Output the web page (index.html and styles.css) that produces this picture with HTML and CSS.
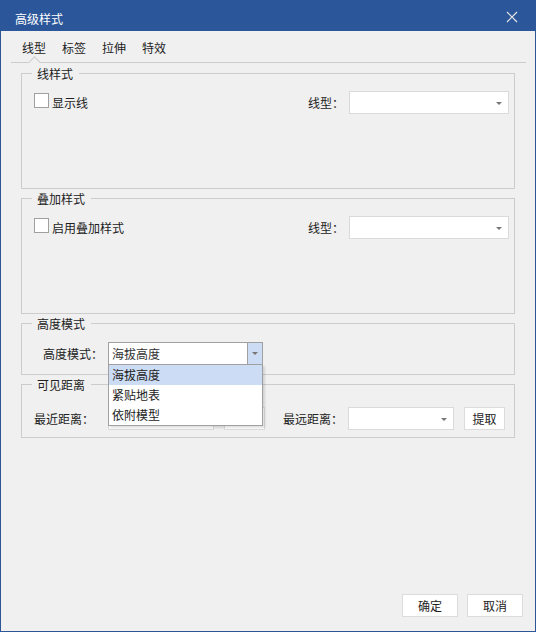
FILE: index.html
```html
<!DOCTYPE html>
<html lang="zh-CN">

<head>
  <meta charset="UTF-8" />
  <title>高级样式</title>
  <link rel="stylesheet" href="styles.css">
</head>

<body>
  <div class="dialog">
    <!-- Title Bar -->
    <div class="titlebar">
      <span class="title">高级样式</span>
      <svg class="close" width="12" height="12" viewBox="0 0 12 12">
        <path d="M1 1 L11 11 M11 1 L1 11" stroke="#e6e6e6" stroke-width="1.2" fill="none" />
      </svg>
    </div>

    <div class="content">
      <!-- Tabs -->
      <div class="tabs">
        <span class="tab active">线型</span>
        <span class="tab">标签</span>
        <span class="tab">拉伸</span>
        <span class="tab">特效</span>
      </div>

      <div class="panel">
        <!-- 线样式 -->
        <div class="group group-tall">
          <div class="group-title">线样式</div>
          <div class="row row-split">
            <label class="check"><span class="box"></span>显示线</label>
            <div class="field">
              <span class="field-label">线型：</span>
              <div class="combo combo-wide"><span class="arrow"></span></div>
            </div>
          </div>
        </div>

        <!-- 叠加样式 -->
        <div class="group group-tall">
          <div class="group-title">叠加样式</div>
          <div class="row row-split">
            <label class="check"><span class="box"></span>启用叠加样式</label>
            <div class="field">
              <span class="field-label">线型：</span>
              <div class="combo combo-wide"><span class="arrow"></span></div>
            </div>
          </div>
        </div>

        <!-- 高度模式 -->
        <div class="group group-height">
          <div class="group-title">高度模式</div>
          <div class="row row-height">
            <span class="field-label">高度模式：</span>
            <div class="combo combo-mode open">
              <span class="combo-text">海拔高度</span>
              <span class="combo-btn"><span class="arrow"></span></span>
              <ul class="popup">
                <li class="selected">海拔高度</li>
                <li>紧贴地表</li>
                <li>依附模型</li>
              </ul>
            </div>
          </div>
        </div>

        <!-- 可见距离 -->
        <div class="group group-distance">
          <div class="group-title">可见距离</div>
          <div class="row row-distance">
            <span class="field-label">最近距离：</span>
            <div class="combo combo-short near"><span class="arrow"></span></div>
            <button class="btn btn-small">提取</button>
            <span class="field-label far-label">最远距离：</span>
            <div class="combo combo-short"><span class="arrow"></span></div>
            <button class="btn btn-small">提取</button>
          </div>
        </div>
      </div>

      <!-- Footer -->
      <div class="footer">
        <button class="btn btn-footer">确定</button>
        <button class="btn btn-footer">取消</button>
      </div>
    </div>
  </div>
</body>

</html>
```

FILE: styles.css
```css
/* General Styles */
* {
  box-sizing: border-box;
}

body {
  margin: 0;
  padding: 0;
  font-family: "Noto Sans CJK SC", "Noto Sans", sans-serif;
  font-size: 12px;
  color: #333;
  background-color: #f0f0f0;
}

/* Window */
.dialog {
  width: 536px;
  height: 632px;
  display: flex;
  flex-direction: column;
  background-color: #f0f0f0;
  border: 1px solid #2b579a;
  border-top: none;
}

.titlebar {
  height: 31px;
  margin: 0 -1px;
  display: flex;
  justify-content: space-between;
  background-color: #2b579a;
  color: #fff;
}

.title {
  padding: 11px 0 0 15px;
  line-height: 16px;
}

.close {
  margin: 11px 18px 0 0;
}

.content {
  flex: 1;
  display: flex;
  flex-direction: column;
  padding: 0 9px 0 10px;
}

/* Tabs */
.tabs {
  position: relative;
  display: flex;
  gap: 16px;
  padding: 9px 0 7px 11px;
  border-bottom: 1px solid #cccccc;
  line-height: 15px;
}

.tab {
  color: #222;
}

/* little notch under the active tab */
.tab.active::after {
  content: "";
  position: absolute;
  left: 19px;
  bottom: -5px;
  width: 8px;
  height: 8px;
  background-color: #f0f0f0;
  border-top: 1px solid #cccccc;
  border-left: 1px solid #cccccc;
  transform: rotate(45deg);
}

/* Group boxes */
.panel {
  display: flex;
  flex-direction: column;
  gap: 9px;
  padding: 10px 11px 0 10px;
}

.group {
  border: 1px solid #cccccc;
  padding: 0 5px 0 12px;
}

.group-tall {
  height: 116px;
}

.group-height {
  height: 52px;
}

.group-distance {
  height: 54px;
}

.group-title {
  width: fit-content;
  height: 16px;
  margin: -8px 0 0 -2px;
  padding: 0 6px 0 5px;
  line-height: 16px;
  background-color: #f0f0f0;
  color: #222;
}

.row {
  display: flex;
  align-items: center;
  height: 23px;
}

.row-split {
  justify-content: space-between;
  margin-top: 9px;
}

.row-height {
  margin-top: 10px;
  padding-left: 9px;
}

.row-distance {
  margin-top: 14px;
}

/* Checkbox */
.check {
  display: flex;
  align-items: center;
  gap: 3px;
  color: #222;
}

.box {
  width: 15px;
  height: 15px;
  margin-bottom: 4px;
  border: 1px solid #a0a0a0;
  background-color: #fff;
}

.field {
  display: flex;
  align-items: center;
}

.field-label {
  color: #222;
  margin-right: 5px;
}

/* Combo boxes */
.combo {
  position: relative;
  height: 23px;
  border: 1px solid #dadada;
  background-color: #fff;
  display: flex;
  align-items: center;
}

.combo-wide {
  width: 160px;
}

.combo-short {
  width: 106px;
}

.combo-mode {
  width: 155px;
  border-color: #a0a0a0;
}

.combo .arrow {
  position: absolute;
  right: 6px;
  top: 10px;
  width: 0;
  height: 0;
  border-left: 3px solid transparent;
  border-right: 3px solid transparent;
  border-top: 3px solid #777;
}

.combo-text {
  padding-left: 3px;
  line-height: 16px;
}

.combo-btn {
  position: absolute;
  top: 0;
  right: 0;
  width: 15px;
  height: 21px;
  border-left: 1px solid #a0a0a0;
  background-color: #cddcf5;
}

.combo-btn .arrow {
  right: 4px;
  top: 9px;
}

.near {
  margin-left: 9px;
}

.far-label {
  margin-left: 18px;
}

/* Drop down list */
.popup {
  position: absolute;
  top: 21px;
  left: -1px;
  width: 155px;
  margin: 0;
  padding: 0;
  list-style: none;
  background-color: #fff;
  border: 1px solid #a0a0a0;
  box-shadow: 2px 2px 2px rgba(0, 0, 0, 0.12);
  z-index: 10;
}

.popup li {
  height: 20px;
  line-height: 20px;
  padding-left: 3px;
  color: #222;
}

.popup li.selected {
  background-color: #cddcf5;
}

/* Buttons */
.btn {
  font-family: "Noto Sans CJK SC", "Noto Sans", sans-serif;
  font-size: 12px;
  color: #222;
  background-color: #fff;
  border: 1px solid #dcdcdc;
  padding: 0;
  line-height: 16px;
}

.btn-small {
  width: 41px;
  height: 23px;
  margin-left: 10px;
}

.footer {
  margin-top: auto;
  display: flex;
  justify-content: flex-end;
  gap: 9px;
  padding: 0 3px 14px 0;
}

.btn-footer {
  width: 56px;
  height: 23px;
}
```
